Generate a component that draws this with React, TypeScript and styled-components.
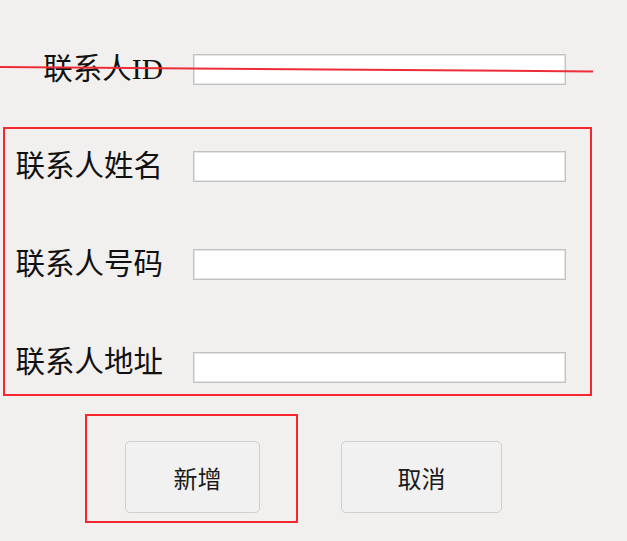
import React from "react";
import styled, { createGlobalStyle } from "styled-components";

const GlobalStyle = createGlobalStyle`
  html, body {
    margin: 0;
    padding: 0;
    background: #f1f0ef;
  }
  body {
    font-family: "Liberation Serif", "Noto Sans CJK SC", serif;
  }
`;

const Page = styled.div`
  position: relative;
  width: 627px;
  height: 541px;
  box-sizing: border-box;
  padding-top: 54px;
  background: #f1f0ef;
  overflow: hidden;
`;

const FormRow = styled.div<{ $labelWidth: number }>`
  display: grid;
  grid-template-columns: ${(p) => p.$labelWidth}px 373px;
  grid-template-rows: 31px;
  column-gap: 30px;
  align-items: center;
  height: 31px;
`;

const Label = styled.span<{ $lift?: number }>`
  text-align: right;
  font-family: "Liberation Serif", "Noto Sans CJK SC", serif;
  font-size: 29.5px;
  line-height: 31px;
  color: #111111;
  white-space: nowrap;
  margin-bottom: ${(p) => p.$lift ?? 0}px;
`;

const TextInput = styled.input`
  box-sizing: border-box;
  width: 373px;
  height: 31px;
  margin: 0;
  padding: 0 6px;
  background: #ffffff;
  border: 1px solid #c2c2c2;
  box-shadow: inset 0 0 0 1px #e4e4e4;
  outline: none;
  font-size: 16px;
`;

const HighlightBox = styled.div`
  box-sizing: border-box;
  border: 2px solid #f7262f;
`;

const FieldGroup = styled(HighlightBox)`
  margin: 42px 0 0 3px;
  width: 589px;
  height: 269px;
  padding: 22px 0 0 0;
  display: flex;
  flex-direction: column;
`;

const GroupRow = styled(FormRow)<{ $gap: number }>`
  margin-top: ${(p) => p.$gap}px;
`;

const ActionRow = styled.div`
  display: flex;
  align-items: flex-start;
  margin: 18px 0 0 85px;
  gap: 43px;
`;

const ButtonBox = styled(HighlightBox)`
  width: 213px;
  height: 109px;
  padding: 25px 0 0 38px;
`;

const ButtonSlot = styled.div`
  padding-top: 27px;
`;

const ActionButton = styled.button<{ $width: number; $shift?: number }>`
  box-sizing: border-box;
  width: ${(p) => p.$width}px;
  height: 72px;
  background: #f1f1f1;
  border: 1px solid #cfcfcf;
  border-radius: 5px;
  font-family: "Noto Sans CJK SC", sans-serif;
  font-size: 24px;
  color: #1a1a1a;
  cursor: pointer;
  padding: 0 0 0 ${(p) => p.$shift ?? 0}px;
`;

const StrikeOverlay = styled.svg`
  position: absolute;
  left: 0;
  top: 0;
  pointer-events: none;
`;

export default function App() {
  return (
    <>
      <GlobalStyle />
      <Page>
        <FormRow $labelWidth={163}>
          <Label>联系人ID</Label>
          <TextInput />
        </FormRow>

        <FieldGroup>
          <GroupRow $labelWidth={158} $gap={0}>
            <Label>联系人姓名</Label>
            <TextInput />
          </GroupRow>
          <GroupRow $labelWidth={158} $gap={67}>
            <Label>联系人号码</Label>
            <TextInput />
          </GroupRow>
          <GroupRow $labelWidth={158} $gap={72}>
            <Label $lift={11}>联系人地址</Label>
            <TextInput />
          </GroupRow>
        </FieldGroup>

        <ActionRow>
          <ButtonBox>
            <ActionButton $width={135} $shift={10}>新增</ActionButton>
          </ButtonBox>
          <ButtonSlot>
            <ActionButton $width={161}>取消</ActionButton>
          </ButtonSlot>
        </ActionRow>

        <StrikeOverlay width="627" height="100" viewBox="0 0 627 100">
          <line x1="0" y1="67" x2="593" y2="71.5" stroke="#ee2c38" strokeWidth="2" />
        </StrikeOverlay>
      </Page>
    </>
  );
}
